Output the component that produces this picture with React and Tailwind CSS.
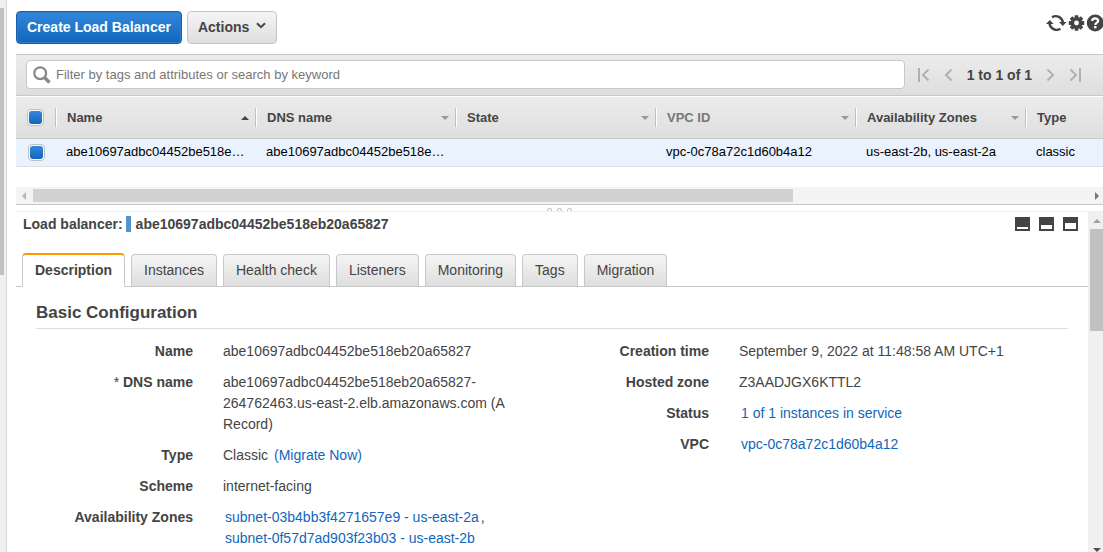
import React, { useState } from "react";

const columns = [
  { name: "Name", sort: "asc" },
  { name: "DNS name", sort: "menu" },
  { name: "State", sort: "menu" },
  { name: "VPC ID", sort: "menu", light: true },
  { name: "Availability Zones", sort: "menu" },
  { name: "Type" },
];

const row = [
  "abe10697adbc04452be518e…",
  "abe10697adbc04452be518e…",
  "",
  "vpc-0c78a72c1d60b4a12",
  "us-east-2b, us-east-2a",
  "classic",
];

const tabs = ["Description", "Instances", "Health check", "Listeners", "Monitoring", "Tags", "Migration"];

function Triangle({ dir, className }) {
  const points = {
    up: "0,4 4,0 8,4",
    down: "0,0 8,0 4,4",
    left: "4,0 4,8 0,4",
    right: "0,0 4,4 0,8",
  };
  const tall = dir === "left" || dir === "right";
  return (
    <svg width={tall ? 4 : 8} height={tall ? 8 : 4} className={className} aria-hidden="true">
      <polygon points={points[dir]} fill="currentColor" />
    </svg>
  );
}

function Tick({ label }) {
  return (
    <label className="flex size-[17px] items-center justify-center rounded border border-[#c0c0c0] bg-[#f8f8f8]">
      <input
        type="checkbox"
        defaultChecked
        aria-label={label}
        className="block size-[13px] appearance-none rounded-[3px] bg-white checked:bg-linear-to-b checked:from-[#3088dd] checked:to-[#1166bb]"
      />
    </label>
  );
}

function ToolIcon({ label, children }) {
  return (
    <button type="button" aria-label={label} className="block shrink-0 text-[#444]">
      {children}
    </button>
  );
}

function Pager({ label, d, w }) {
  return (
    <button type="button" aria-label={label} className="text-[#b0b0b0]">
      <svg width={w} height="14" viewBox={`0 0 ${w} 14`} fill="none" stroke="currentColor" strokeWidth="2">
        <path d={d} />
      </svg>
    </button>
  );
}

function PaneButton({ label, top }) {
  return (
    <button type="button" aria-label={label} className="block">
      <svg width="15" height="14" aria-hidden="true">
        <rect width="15" height="14" fill="#444" />
        <rect x="2" y={top} width="11" height={12 - top} fill="#fff" />
      </svg>
    </button>
  );
}

function Field({ label, required, children }) {
  return (
    <div className="flex gap-[30px]">
      <dt className="w-[157px] shrink-0 text-right font-bold">
        {required && <span className="font-normal">* </span>}
        {label}
      </dt>
      <dd className="min-w-0 flex-1 pr-10">{children}</dd>
    </div>
  );
}

function Link({ children }) {
  return (
    <a href="#" className="text-[#1166bb] hover:underline">
      {children}
    </a>
  );
}

export default function App() {
  const [active, setActive] = useState("Description");

  return (
    <div className="flex h-screen overflow-hidden bg-white font-['Liberation_Sans',Arial,sans-serif] text-sm text-[#444]">
      <div className="w-[7px] shrink-0 border-r border-[#d5d9d9] bg-[#f0f0f0] pt-2">
        <div className="h-[267px] w-1 bg-[#c1c1c1]" />
      </div>

      <main className="ml-[9px] flex min-w-0 flex-1 flex-col">
        <header className="flex h-[54px] shrink-0 items-center gap-[5px]">
          <button
            type="button"
            className="h-[33px] rounded border border-[#1a60a8] bg-linear-to-b from-[#3088dd] to-[#1166bb] px-2.5 font-bold text-white inset-shadow-[0_0_0_1px_#2f7ccb]"
          >
            Create Load Balancer
          </button>
          <button
            type="button"
            className="flex h-[33px] items-center gap-[7px] rounded border border-[#c4c4c4] bg-linear-to-b from-[#f5f5f5] to-[#dedede] px-2.5 font-bold"
          >
            Actions
            <svg width="10" height="8" viewBox="0 0 10 8" fill="none" stroke="#444" strokeWidth="2" className="-mt-0.5">
              <path d="M1 1.2 L5 5.2 L9 1.2" />
            </svg>
          </button>
          <div className="ml-auto flex items-center pb-2">
            <ToolIcon label="Refresh">
              <svg width="21" height="18" viewBox="0 0 21 18">
                <path d="M6 3.2 A7.2 7.2 0 0 1 16.9 8.6" fill="none" stroke="currentColor" strokeWidth="2.4" />
                <path d="M14.4 14.8 A7.2 7.2 0 0 1 3.5 9.4" fill="none" stroke="currentColor" strokeWidth="2.4" />
                <path d="M13 8 H20.6 L16.8 12 Z M0 10 H7.6 L3.8 6 Z" fill="currentColor" />
              </svg>
            </ToolIcon>
            <ToolIcon label="Settings">
              <svg width="19" height="18" viewBox="0 0 19 18">
                <g transform="translate(9.5 9)" fill="currentColor">
                  {[0, 45, 90, 135].map((a) => (
                    <rect key={a} x="-1.9" y="-7.7" width="3.8" height="15.4" rx="0.5" transform={`rotate(${a})`} />
                  ))}
                  <circle r="5.8" />
                  <circle r="2.4" fill="#fff" />
                </g>
              </svg>
            </ToolIcon>
            <ToolIcon label="Help">
              <svg width="17" height="18" viewBox="0 0 17 18">
                <circle cx="9.2" cy="9" r="8.4" fill="currentColor" />
                <path d="M6.2 7 C6.2 3.6 12.2 3.6 12.2 6.8 C12.2 8.8 9.3 8.6 9.3 11" fill="none" stroke="#fff" strokeWidth="2.2" />
                <rect x="8.1" y="12" width="2.4" height="2.4" fill="#fff" />
              </svg>
            </ToolIcon>
          </div>
        </header>

        <div className="flex h-[42px] shrink-0 items-center border-y border-[#c8c8c8] bg-linear-to-b from-[#ececec] to-[#dedede] pr-[22px] pl-2.5">
          <label className="mb-0.5 flex h-[29px] min-w-0 flex-1 items-center gap-[5px] rounded border border-[#c8c8c8] bg-white pl-1.5">
            <svg width="18" height="18" viewBox="0 0 18 18" fill="none" stroke="#888" className="mt-0.5 shrink-0">
              <circle cx="7.2" cy="7.2" r="5.9" strokeWidth="2.2" />
              <path d="M11.5 11.5 L16.5 16.5" strokeWidth="3.4" />
            </svg>
            <input
              type="search"
              aria-label="Filter load balancers"
              placeholder="Filter by tags and attributes or search by keyword"
              className="min-w-0 flex-1 bg-transparent pt-0.5 text-[13px] outline-none placeholder:text-[#777]"
            />
          </label>
          <div className="ml-[13px] flex items-center gap-3.5">
            <Pager label="First page" w={12} d="M1 0 V14 M10.5 1.5 L5 7 L10.5 12.5" />
            <Pager label="Previous page" w={9} d="M7.5 1.5 L2 7 L7.5 12.5" />
            <span className="font-bold">1 to 1 of 1</span>
            <Pager label="Next page" w={9} d="M1.5 1.5 L7 7 L1.5 12.5" />
            <Pager label="Last page" w={12} d="M1.5 1.5 L7 7 L1.5 12.5 M11 0 V14" />
          </div>
        </div>

        <div className="mt-px h-[90px] shrink-0 overflow-hidden">
          <table className="w-full table-fixed border-separate border-spacing-0 text-[13px]">
            <colgroup>
              <col className="w-[39px]" />
              <col className="w-[200px]" />
              <col className="w-[200px]" />
              <col className="w-[200px]" />
              <col className="w-[200px]" />
              <col className="w-[170px]" />
              <col />
            </colgroup>
            <thead>
              <tr className="h-[42px] bg-linear-to-b from-[#ececec] to-[#dedede]">
                <th className="border-b border-[#c8c8c8] p-0 pl-[11px]">
                  <Tick label="Select all" />
                </th>
                {columns.map((c) => (
                  <th key={c.name} className="border-b border-[#c8c8c8] p-0 text-left">
                    <div className="flex h-[19px] items-center justify-between border-l border-[#c0c0c0] pt-px pr-1.5 pl-[11px] inset-shadow-[1px_0_0_#fff]">
                      <span className={c.light ? "text-[#777]" : ""}>{c.name}</span>
                      {c.sort === "asc" && <Triangle dir="up" className="text-[#444]" />}
                      {c.sort === "menu" && <Triangle dir="down" className="text-[#999]" />}
                    </div>
                  </th>
                ))}
              </tr>
            </thead>
            <tbody>
              <tr className="h-7 bg-[#eaf2fe] text-black">
                <td className="border-b border-[#dcdfe4] p-0 pl-3">
                  <Tick label="Select load balancer" />
                </td>
                {row.map((v, i) => (
                  <td key={i} className="border-b border-[#dcdfe4] p-0 pl-[11px] whitespace-nowrap">
                    {v}
                  </td>
                ))}
              </tr>
            </tbody>
          </table>
        </div>

        <div className="flex h-[18px] shrink-0 items-center border-b border-[#c8c8c8] bg-[#f4f4f4] pr-1 pl-1.5">
          <Triangle dir="left" className="mr-[7px] shrink-0 text-[#b5b5b5]" />
          <div className="flex-1">
            <div className="h-[13px] w-[72%] bg-[#d2d2d2]" />
          </div>
          <Triangle dir="right" className="ml-1.5 shrink-0 text-[#777]" />
        </div>

        <div className="flex h-[7px] shrink-0 items-end justify-center gap-[5px] border-b border-[#eee]">
          {[0, 1, 2].map((i) => (
            <span key={i} className="h-[3px] w-[5px] rounded-t-sm border border-b-0 border-[#c4c4c4]" />
          ))}
        </div>

        <div className="flex min-h-0 flex-1">
          <section className="min-w-0 flex-1 overflow-hidden">
            <div className="flex h-6 items-center pr-2.5 pl-[7px] font-bold">
              <span>Load balancer:</span>
              <span className="mr-[5px] ml-[3px] h-4 w-[5px] bg-[#5294cf]" />
              <span>abe10697adbc04452be518eb20a65827</span>
              <div className="ml-auto flex gap-[9px]">
                <PaneButton label="Minimise pane" top={10} />
                <PaneButton label="Split pane" top={8} />
                <PaneButton label="Maximise pane" top={6} />
              </div>
            </div>

            <div role="tablist" className="mt-[17px] flex items-end gap-1.5 border-b border-[#c8c8c8] pl-1.5">
              {tabs.map((t) => (
                <button
                  key={t}
                  type="button"
                  role="tab"
                  aria-selected={t === active}
                  onClick={() => setActive(t)}
                  className={
                    t === active
                      ? "-mb-px h-[34px] rounded-t border border-t-2 border-[#c8c8c8] border-t-[#ff9900] border-b-white bg-white px-3 pb-0.5 font-bold"
                      : "h-8 rounded-t border border-b-0 border-[#c8c8c8] bg-linear-to-b from-[#f5f5f5] to-[#dedede] px-3 pb-0.5"
                  }
                >
                  {t}
                </button>
              ))}
            </div>

            <div className="px-5 leading-[21px]">
              <h2 className="border-b border-[#ddd] pt-[15px] pb-[5px] text-[17px] leading-[21px] font-bold">
                Basic Configuration
              </h2>
              <div className="mt-3 grid grid-cols-2">
                <dl className="flex flex-col gap-2.5">
                  <Field label="Name">abe10697adbc04452be518eb20a65827</Field>
                  <Field label="DNS name" required>
                    abe10697adbc04452be518eb20a65827-
                    <br />
                    264762463.us-east-2.elb.amazonaws.com (A Record)
                  </Field>
                  <Field label="Type">
                    Classic <span className="pl-0.5"><Link>(Migrate Now)</Link></span>
                  </Field>
                  <Field label="Scheme">internet-facing</Field>
                  <Field label="Availability Zones">
                    <div className="pl-0.5 whitespace-nowrap">
                      <Link>subnet-03b4bb3f4271657e9 - us-east-2a</Link>
                      <span className="pl-0.5">,</span>
                      <br />
                      <Link>subnet-0f57d7ad903f23b03 - us-east-2b</Link>
                    </div>
                  </Field>
                </dl>
                <dl className="flex flex-col gap-2.5">
                  <Field label="Creation time">September 9, 2022 at 11:48:58 AM UTC+1</Field>
                  <Field label="Hosted zone">Z3AADJGX6KTTL2</Field>
                  <Field label="Status">
                    <span className="pl-0.5"><Link>1 of 1 instances in service</Link></span>
                  </Field>
                  <Field label="VPC">
                    <span className="pl-0.5"><Link>vpc-0c78a72c1d60b4a12</Link></span>
                  </Field>
                </dl>
              </div>
            </div>
          </section>

          <div className="flex w-[15px] shrink-0 flex-col items-end bg-[#f0f0f0]">
            <Triangle dir="up" className="mt-[7px] mr-0.5 mb-1.5 shrink-0 text-[#a0a0a0]" />
            <div className="h-[102px] w-[13px] shrink-0 bg-[#c1c1c1]" />
            <Triangle dir="down" className="mt-auto mr-0.5 shrink-0 text-[#505050]" />
          </div>
        </div>
      </main>
    </div>
  );
}
